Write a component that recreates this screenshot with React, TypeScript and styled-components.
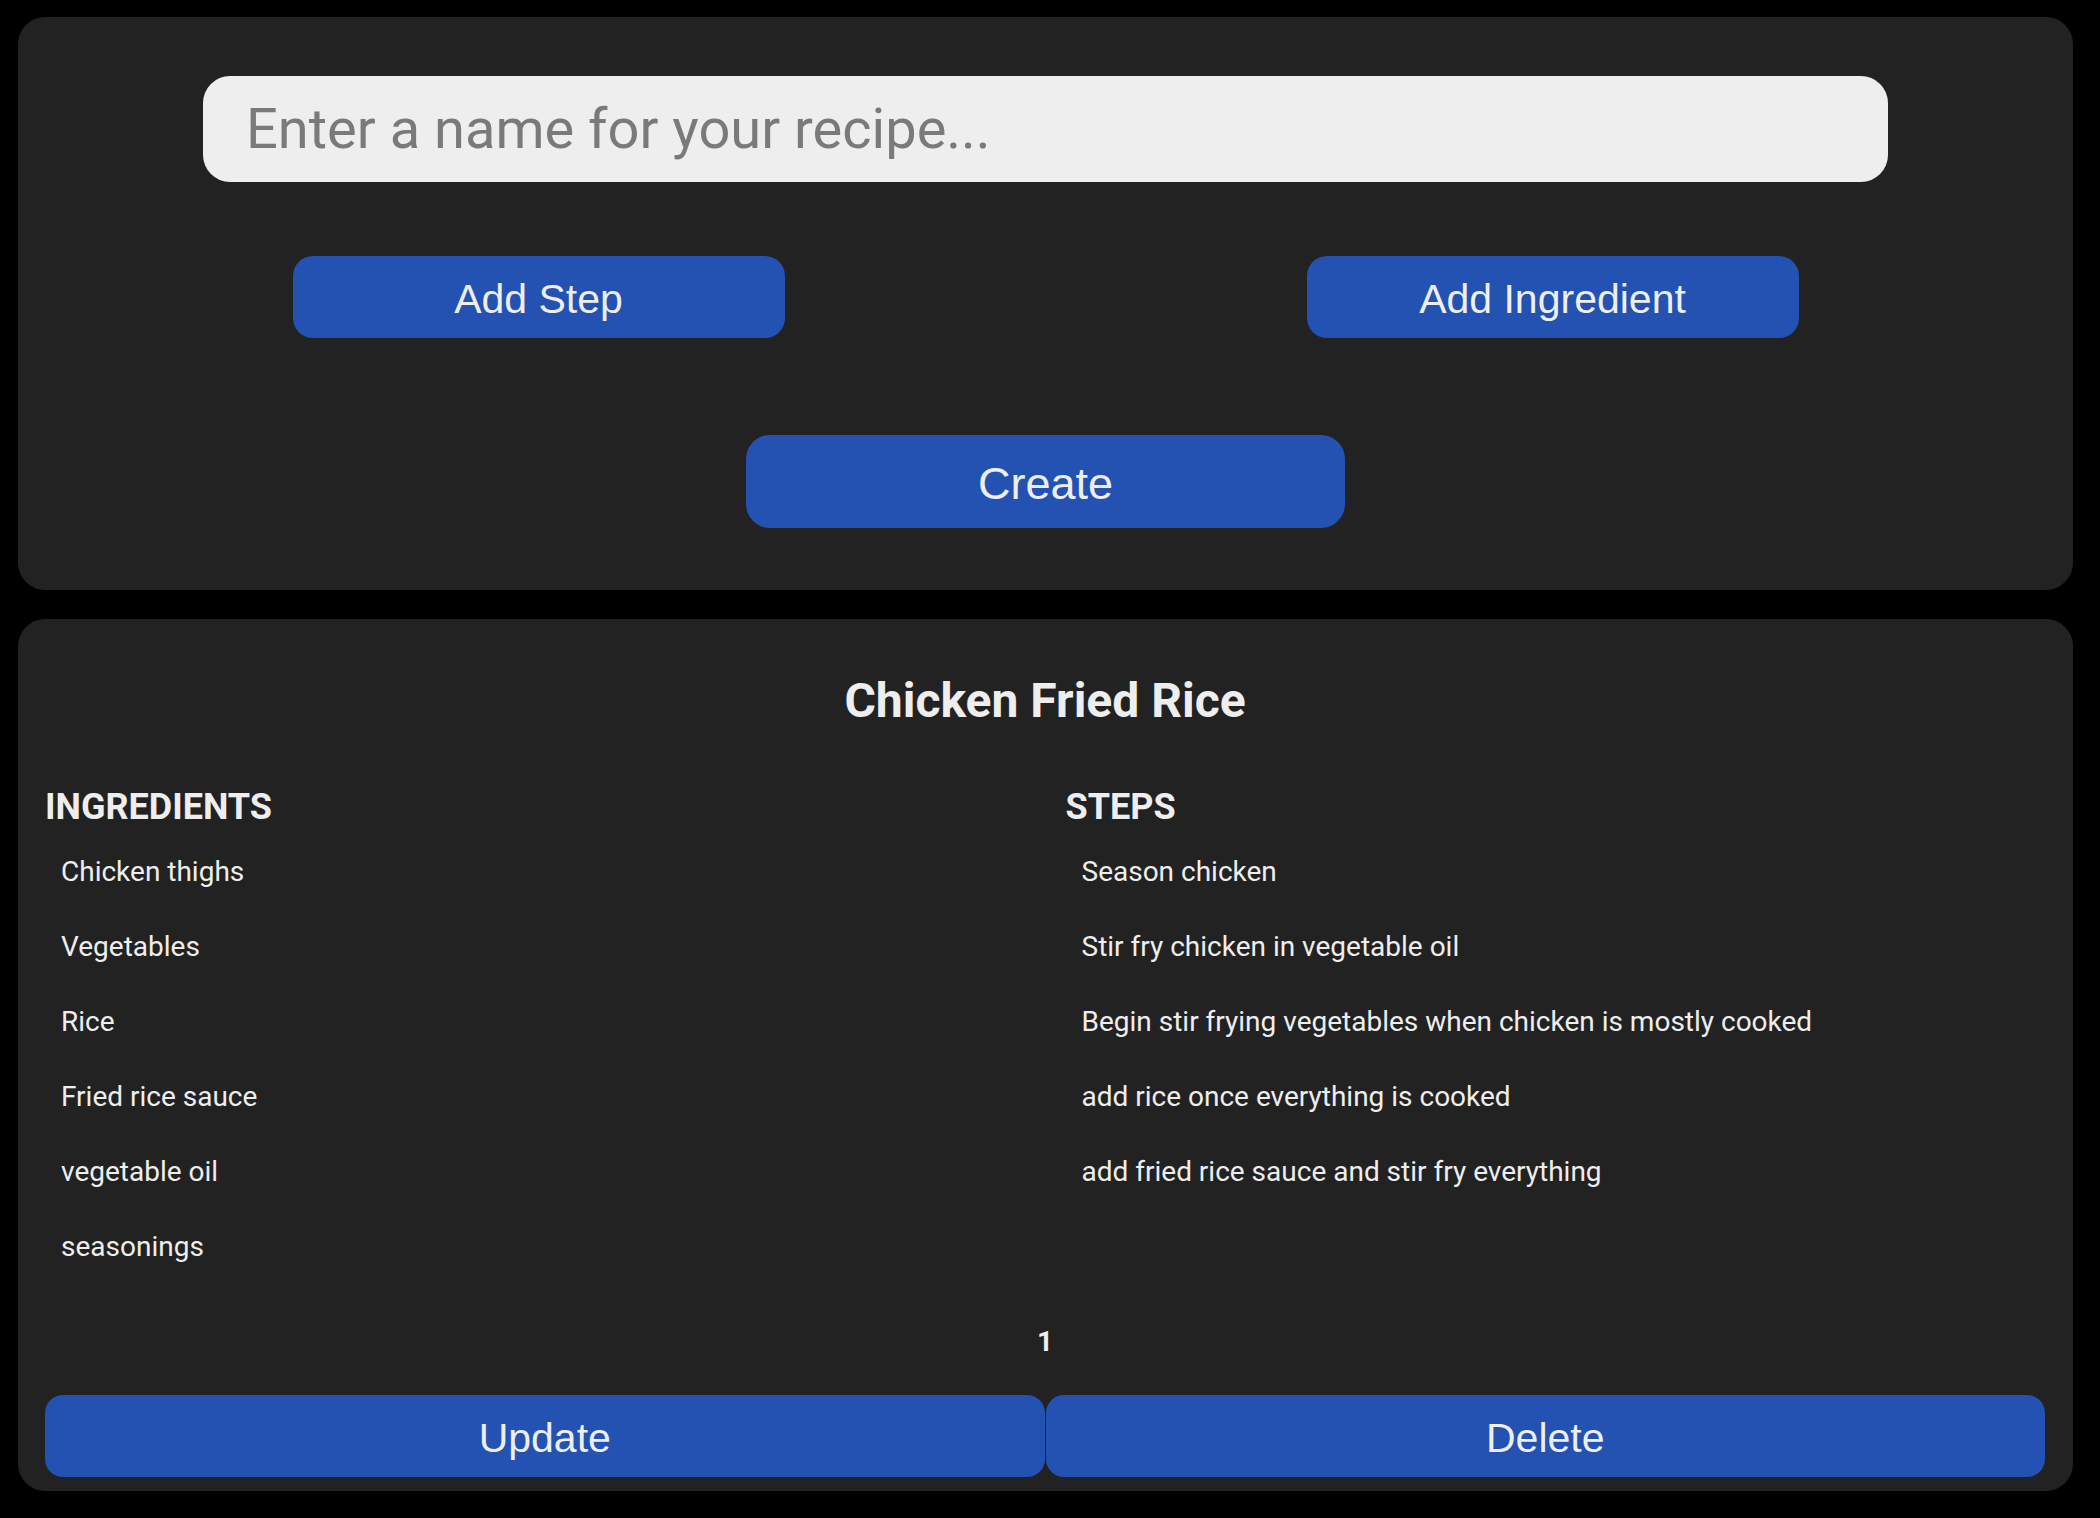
import React from "react";
import styled, { createGlobalStyle } from "styled-components";

const GlobalStyle = createGlobalStyle`
  html, body {
    margin: 0;
    padding: 0;
    background: #000000;
  }
  body {
    font-family: Roboto, "Liberation Sans", sans-serif;
    color: #eeeeee;
  }
  * { box-sizing: border-box; }
`;

const Page = styled.main`
  display: flex;
  flex-direction: column;
  gap: 29px;
  padding: 17px 27px 27px 18px;
`;

const Card = styled.section`
  background: #222222;
  border-radius: 27px;
  display: flex;
  flex-direction: column;
  align-items: center;
`;

const CreateCard = styled(Card)`
  padding: 59px 0 62px;
`;

const RecipeCard = styled(Card)`
  padding: 53px 28px 14px 27px;
  align-items: stretch;
`;

const NameInput = styled.input`
  width: 1685px;
  height: 106px;
  border: none;
  outline: none;
  border-radius: 27px;
  background: #eeeeee;
  padding: 0 43px;
  font-family: Roboto, sans-serif;
  font-size: 56px;
  color: #222222;
  &::placeholder {
    color: #7a7a7a;
  }
`;

const ButtonRow = styled.div`
  width: 100%;
  display: flex;
  justify-content: center;
  gap: 522px;
  margin-top: 74px;
`;

const Button = styled.button<{ $w?: number; $h?: number; $fs?: number; $r?: number }>`
  width: ${(p) => (p.$w ? `${p.$w}px` : "auto")};
  height: ${(p) => p.$h ?? 82}px;
  border: none;
  border-radius: ${(p) => p.$r ?? 20}px;
  background: #2352b2;
  color: #eeeeee;
  font-family: "Liberation Sans", Arial, sans-serif;
  font-size: ${(p) => p.$fs ?? 41}px;
  display: flex;
  align-items: center;
  justify-content: center;
  padding: 4px 0 0;
  cursor: pointer;
`;

const CreateButton = styled(Button)`
  margin-top: 97px;
`;

const Title = styled.h2`
  margin: 0;
  text-align: center;
  font-size: 48px;
  line-height: 57px;
  font-weight: 700;
  color: #eeeeee;
`;

const Columns = styled.div`
  display: grid;
  grid-template-columns: 1fr 1fr;
  column-gap: 41px;
  margin-top: 57px;
`;

const Column = styled.div`
  display: flex;
  flex-direction: column;
`;

const Heading = styled.h3`
  margin: 0;
  font-size: 36px;
  line-height: 42px;
  font-weight: 700;
  color: #eeeeee;
`;

const List = styled.ul`
  list-style: none;
  margin: 27px 0 0;
  padding: 0 0 0 16px;
  display: flex;
  flex-direction: column;
  gap: 42px;
`;

const Item = styled.li`
  font-size: 28px;
  line-height: 33px;
  color: #eeeeee;
`;

const PageNumber = styled.div`
  margin-top: 62px;
  text-align: center;
  font-size: 28px;
  line-height: 33px;
  font-weight: 700;
  color: #eeeeee;
`;

const Actions = styled.div`
  display: grid;
  grid-template-columns: 1fr 1fr;
  column-gap: 1px;
  margin-top: 37px;
`;

const ingredients = [
  "Chicken thighs",
  "Vegetables",
  "Rice",
  "Fried rice sauce",
  "vegetable oil",
  "seasonings",
];

const steps = [
  "Season chicken",
  "Stir fry chicken in vegetable oil",
  "Begin stir frying vegetables when chicken is mostly cooked",
  "add rice once everything is cooked",
  "add fried rice sauce and stir fry everything",
];

export default function App() {
  return (
    <>
      <GlobalStyle />
      <Page>
        <CreateCard>
          <NameInput placeholder="Enter a name for your recipe..." />
          <ButtonRow>
            <Button $w={492}>Add Step</Button>
            <Button $w={492}>Add Ingredient</Button>
          </ButtonRow>
          <CreateButton $w={599} $h={93} $fs={45} $r={24}>
            Create
          </CreateButton>
        </CreateCard>
        <RecipeCard>
          <Title>Chicken Fried Rice</Title>
          <Columns>
            <Column>
              <Heading>INGREDIENTS</Heading>
              <List>
                {ingredients.map((i) => (
                  <Item key={i}>{i}</Item>
                ))}
              </List>
            </Column>
            <Column>
              <Heading>STEPS</Heading>
              <List>
                {steps.map((s) => (
                  <Item key={s}>{s}</Item>
                ))}
              </List>
            </Column>
          </Columns>
          <PageNumber>1</PageNumber>
          <Actions>
            <Button $r={18}>Update</Button>
            <Button $r={18}>Delete</Button>
          </Actions>
        </RecipeCard>
      </Page>
    </>
  );
}
